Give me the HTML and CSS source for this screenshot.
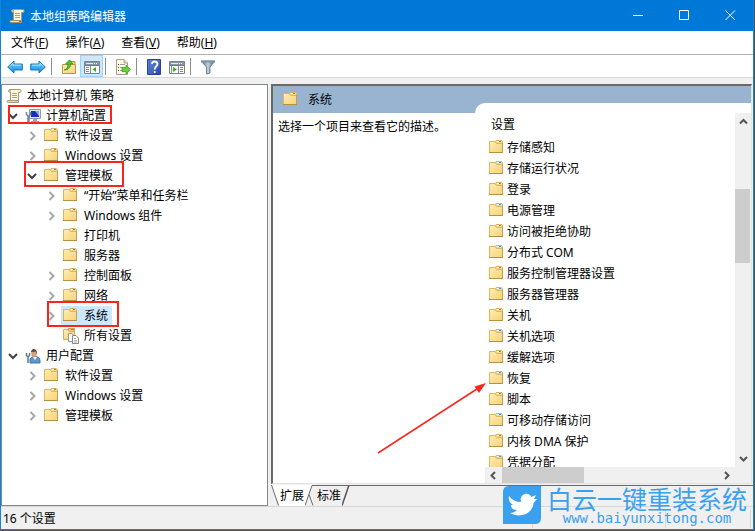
FILE: index.html
```html
<!DOCTYPE html>
<html lang="zh-CN">
<head>
<meta charset="utf-8">
<title>本地组策略编辑器</title>
<link rel="stylesheet" href="styles.css">
</head>
<body>
<svg class="sprite" aria-hidden="true">
  <defs>
    <linearGradient id="gold" x1="0" y1="0" x2="1" y2="1"><stop offset="0" stop-color="#ffeeb0"/><stop offset="1" stop-color="#f5d27a"/></linearGradient>
    <linearGradient id="sky" x1="0" y1="0" x2="0" y2="1"><stop offset="0" stop-color="#7ad4fa"/><stop offset="1" stop-color="#0d8be0"/></linearGradient>
    <linearGradient id="help" x1="0" y1="0" x2="1" y2="1"><stop offset="0" stop-color="#6f8fe0"/><stop offset="1" stop-color="#2444a8"/></linearGradient>
    <linearGradient id="steel" x1="0" y1="0" x2="1" y2="0"><stop offset="0" stop-color="#4f6474"/><stop offset=".5" stop-color="#c0d2de"/><stop offset="1" stop-color="#3f5464"/></linearGradient>
    <symbol id="folder" viewBox="0 1 16 16">
      <path d="M6.500 5V2.500L7 1.500H12.500L13.500 2.500V5" fill="#f0d690" stroke="#d6b468"/>
      <path d="M8 2.500H12" stroke="#fff"/><path d="M10 2.500H12" stroke="#3d9be0"/>
      <path d="M.500 2.500H6L7.500 4.500H13.500V13.500H.500Z" fill="url(#gold)" stroke="#dcb662"/>
      <path d="M0 13.500H14" stroke="#b98f42"/><path d="M13.500 4V13" stroke="#c89e4c"/>
    </symbol>
    <symbol id="scroll" viewBox="0 0 16 16">
      <path d="M4 1.500H14C15.500 1.500 15.500 4.500 14 4.500H12.500V12.500H4.500V3.500C4.500 2.500 4 1.500 4 1.500Z" fill="#fbf5dc" stroke="#a69a76"/>
      <path d="M4 1.500C2 1.500 2 4.500 4.500 4.500" fill="#d9ceaa" stroke="#a69a76"/>
      <path d="M2 12.500H10C10 15 12.500 15 12.500 12.500V14.500H2.500C.500 14.500 .500 12.500 2 12.500Z" fill="#e6dcb9" stroke="#a69a76"/>
      <path d="M6 5.500H11M6 7.500H11M6 9.500H11" stroke="#a9a18b"/>
    </symbol>
    <symbol id="computer" viewBox="0 0 16 16">
      <path d="M4.500 1.500H15.500V10.500H4.500Z" fill="#dfe5ee" stroke="#8f99aa"/>
      <path d="M6 3H14V9H6Z" fill="#1830b8"/><path d="M10 3H14V8Z" fill="#7fa9ef"/>
      <path d="M8 11H12V13H14V14.500H6V13H8Z" fill="#9ba4b4"/>
      <path d="M1.500 4V6.500L3 8V15M5.500 4V6.500L3.500 8M4 8V15" fill="none" stroke="#71889a" stroke-width="1.500"/>
    </symbol>
    <symbol id="user" viewBox="0 0 16 16">
      <path d="M5 15V11C6 9 8 8.500 10 8.500C13 8.500 15 10 15 13V15Z" fill="#5c96cc" stroke="#3f78ab"/>
      <path d="M8 9L10 12L12 9Z" fill="#fff"/>
      <ellipse cx="9" cy="5.500" rx="2.800" ry="3.500" fill="#d9a078"/>
      <path d="M6 4C6.500 -.500 12.500 0 12 6L10.500 3.500Z" fill="#584438"/>
      <path d="M1.500 5V7.500L3 9V15M4.500 5V7.500L3 9" fill="none" stroke="#60788b" stroke-width="1.500"/>
    </symbol>
    <symbol id="allset" viewBox="0 0 16 16">
      <path d="M5.500 3V.500H11.500V4" fill="#e9cc84" stroke="#c9a14d"/><path d="M8 1.500H11" stroke="#3d9be0"/>
      <path d="M.500 1.500H4.500L6 3.500H11.500V11.500H.500Z" fill="url(#gold)" stroke="#d5ac57"/>
      <path d="M5.500 5.500H9L11.500 8V13.500H5.500Z" fill="#fff" stroke="#959595"/>
      <path d="M9.500 7.500H13L15.500 10V15.500H9.500Z" fill="#fff" stroke="#888"/>
      <path d="M11 10.500H13M11 12.500H14M11 14H14" stroke="#aaa"/>
    </symbol>
    <symbol id="arrow" viewBox="0 0 16 16"><path d="M.700 8L7 2V5H15.300V11H7V14Z" fill="url(#sky)" stroke="#1976b4"/><path d="M2.500 7.800L6 4.500V6.200H14" fill="none" stroke="#a4e4ff"/></symbol>
    <symbol id="chev" viewBox="0 0 16 16"><path d="M6.500 4L10.500 8L6.500 12" fill="none" stroke="#a6a6a6" stroke-width="2"/></symbol>
    <symbol id="chevopen" viewBox="0 0 16 16"><path d="M4 6L8 10L12 6" fill="none" stroke="#404040" stroke-width="2"/></symbol>
    <symbol id="pane" viewBox="0 0 16 16">
      <path d="M.500 2.500H15.500V14.500H.500Z" fill="#fff" stroke="#78838e"/>
      <path d="M1 3H15V6H1Z" fill="#8997a5"/><path d="M2 4.500H9" stroke="#e2e8ed"/><path d="M10 4.500H14" stroke="#fff" stroke-dasharray="1 1"/>
      <path d="M1 6.500H15" stroke="#6d7985"/>
    </symbol>
  </defs>
</svg>

<div class="window">
  <header class="titlebar">
    <svg class="icon"><use href="#scroll"/></svg>
    <h1>本地组策略编辑器</h1>
    <div class="controls">
      <button type="button" aria-label="最小化"><svg viewBox="0 0 11 11"><path d="M0 5.500H10"/></svg></button>
      <button type="button" aria-label="最大化"><svg viewBox="0 0 11 11"><path d="M.500 .500H9.500V9.500H.500Z"/></svg></button>
      <button type="button" aria-label="关闭"><svg viewBox="0 0 11 11"><path d="M.500 .500L10 10M10 .500L.500 10"/></svg></button>
    </div>
  </header>

  <nav class="menubar">
    <button type="button">文件(<u>F</u>)</button>
    <button type="button">操作(<u>A</u>)</button>
    <button type="button">查看(<u>V</u>)</button>
    <button type="button">帮助(<u>H</u>)</button>
  </nav>

  <div class="toolbar" role="toolbar">
    <button type="button" aria-label="后退"><svg class="icon"><use href="#arrow"/></svg></button>
    <button type="button" aria-label="前进"><svg class="icon flip"><use href="#arrow"/></svg></button>
    <span class="sep"></span>
    <button type="button" aria-label="上一级"><svg class="icon" viewBox="0 0 16 16"><path d="M9 4V2.500H14V5" fill="#e9cc84" stroke="#b99749"/><path d="M1.500 5.500H14.500V14.500H1.500Z" fill="url(#gold)" stroke="#b99749"/><path d="M3 11C6 10 7 8 7 5H4.500L8.500 .800L12 5H9.500C9.500 9 7 11 3 11Z" fill="#4fc32a" stroke="#2f8f1b" stroke-width=".700"/></svg></button>
    <button type="button" class="active" aria-label="显示/隐藏控制台树"><svg class="icon" viewBox="0 0 16 16"><use href="#pane"/><path d="M2 8.500H5M2 10.500H5M2 12.500H5" stroke="#7d8c9b"/><path d="M6.500 7V14" stroke="#7d8c9b"/><path d="M12 8V13L8.500 10.500Z" fill="#34ad25"/></svg></button>
    <span class="sep"></span>
    <button type="button" aria-label="导出列表"><svg class="icon" viewBox="0 0 16 16"><path d="M1.500 .500H9L12.500 4V15.500H1.500Z" fill="#fffbe8" stroke="#a9a184"/><path d="M9 .500V4H12.500" fill="#e5dcc0" stroke="#a9a184"/><path d="M3 5.500H4M3 8.500H4M3 11.500H4" stroke="#555"/><path d="M5 5.500H10M5 8.500H8M5 11.500H9" stroke="#99a"/><path d="M7 8.500H11V6L15.500 10.500L11 15V12.500H7Z" fill="#67d13b" stroke="#38a31c" stroke-width=".800"/></svg></button>
    <span class="sep"></span>
    <button type="button" aria-label="帮助"><svg class="icon" viewBox="0 0 16 16"><path d="M1.500 .500H14.500V15.500H1.500Z" fill="url(#help)" stroke="#26409a"/><path d="M3.500 1V15" stroke="#4264bd"/><path d="M6 5C6 1.500 11.500 1.800 11.500 5C11.500 7.500 8.700 7.500 8.700 10.500" fill="none" stroke="#fff" stroke-width="1.800"/><circle cx="8.700" cy="13" r="1.100" fill="#fff"/></svg></button>
    <button type="button" aria-label="显示/隐藏操作窗格"><svg class="icon" viewBox="0 0 16 16"><use href="#pane"/><path d="M11 8.500H14M11 10.500H14M11 12.500H14" stroke="#4d93c5"/><path d="M9.500 7V14M2.500 7V14" stroke="#7d8c9b"/><path d="M4 8V13L8 10.500Z" fill="#34ad25"/></svg></button>
    <span class="sep"></span>
    <button type="button" aria-label="筛选器"><svg class="icon" viewBox="0 0 16 16"><path d="M1 2H15L10 8V14L6.500 15V8Z" fill="url(#steel)" stroke="#597080" stroke-width=".800"/><path d="M1 2.500H15" stroke="#7e96a6" stroke-width="2"/></svg></button>
  </div>

  <main class="body">
    <section class="tree" aria-label="控制台树">
      <ul>
        <li><div class="row root"><span class="label"><svg class="icon"><use href="#scroll"/></svg>本地计算机 策略</span></div></li>
        <li><div class="row"><svg class="icon"><use href="#chevopen"/></svg><span class="label"><svg class="icon"><use href="#computer"/></svg>计算机配置</span><i class="mark mark-config"></i></div>
          <ul>
            <li><div class="row"><svg class="icon"><use href="#chev"/></svg><span class="label"><svg class="icon"><use href="#folder"/></svg>软件设置</span></div></li>
            <li><div class="row"><svg class="icon"><use href="#chev"/></svg><span class="label"><svg class="icon"><use href="#folder"/></svg>Windows 设置</span></div></li>
            <li><div class="row"><svg class="icon"><use href="#chevopen"/></svg><span class="label"><svg class="icon"><use href="#folder"/></svg>管理模板</span><i class="mark mark-template"></i></div>
              <ul>
                <li><div class="row"><svg class="icon"><use href="#chev"/></svg><span class="label"><svg class="icon"><use href="#folder"/></svg>“开始”菜单和任务栏</span></div></li>
                <li><div class="row"><svg class="icon"><use href="#chev"/></svg><span class="label"><svg class="icon"><use href="#folder"/></svg>Windows 组件</span></div></li>
                <li><div class="row"><svg class="icon"></svg><span class="label"><svg class="icon"><use href="#folder"/></svg>打印机</span></div></li>
                <li><div class="row"><svg class="icon"></svg><span class="label"><svg class="icon"><use href="#folder"/></svg>服务器</span></div></li>
                <li><div class="row"><svg class="icon"><use href="#chev"/></svg><span class="label"><svg class="icon"><use href="#folder"/></svg>控制面板</span></div></li>
                <li><div class="row"><svg class="icon"><use href="#chev"/></svg><span class="label"><svg class="icon"><use href="#folder"/></svg>网络</span></div></li>
                <li><div class="row"><svg class="icon"><use href="#chev"/></svg><span class="label selected"><svg class="icon"><use href="#folder"/></svg>系统</span><i class="mark mark-system"></i></div></li>
                <li><div class="row"><svg class="icon"></svg><span class="label"><svg class="icon"><use href="#allset"/></svg>所有设置</span></div></li>
              </ul>
            </li>
          </ul>
        </li>
        <li><div class="row"><svg class="icon"><use href="#chevopen"/></svg><span class="label"><svg class="icon"><use href="#user"/></svg>用户配置</span></div>
          <ul>
            <li><div class="row"><svg class="icon"><use href="#chev"/></svg><span class="label"><svg class="icon"><use href="#folder"/></svg>软件设置</span></div></li>
            <li><div class="row"><svg class="icon"><use href="#chev"/></svg><span class="label"><svg class="icon"><use href="#folder"/></svg>Windows 设置</span></div></li>
            <li><div class="row"><svg class="icon"><use href="#chev"/></svg><span class="label"><svg class="icon"><use href="#folder"/></svg>管理模板</span></div></li>
          </ul>
        </li>
      </ul>
    </section>

    <section class="right">
      <div class="details">
        <div class="banner">
          <h2><svg class="icon"><use href="#folder"/></svg>系统</h2>
          <div class="notch"></div>
        </div>
        <div class="columns">
          <p class="description">选择一个项目来查看它的描述。</p>
          <div class="listing">
            <div class="list">
              <h3>设置</h3>
              <ul>
                <li><svg class="icon"><use href="#folder"/></svg>存储感知</li>
                <li><svg class="icon"><use href="#folder"/></svg>存储运行状况</li>
                <li><svg class="icon"><use href="#folder"/></svg>登录</li>
                <li><svg class="icon"><use href="#folder"/></svg>电源管理</li>
                <li><svg class="icon"><use href="#folder"/></svg>访问被拒绝协助</li>
                <li><svg class="icon"><use href="#folder"/></svg>分布式 COM</li>
                <li><svg class="icon"><use href="#folder"/></svg>服务控制管理器设置</li>
                <li><svg class="icon"><use href="#folder"/></svg>服务器管理器</li>
                <li><svg class="icon"><use href="#folder"/></svg>关机</li>
                <li><svg class="icon"><use href="#folder"/></svg>关机选项</li>
                <li><svg class="icon"><use href="#folder"/></svg>缓解选项</li>
                <li><svg class="icon"><use href="#folder"/></svg>恢复</li>
                <li><svg class="icon"><use href="#folder"/></svg>脚本</li>
                <li><svg class="icon"><use href="#folder"/></svg>可移动存储访问</li>
                <li><svg class="icon"><use href="#folder"/></svg>内核 DMA 保护</li>
                <li><svg class="icon"><use href="#folder"/></svg>凭据分配</li>
              </ul>
            </div>
            <div class="vscroll">
              <button type="button" aria-label="向上滚动"><svg viewBox="0 0 9 9"><path d="M1 6.500L4.500 3L8 6.500"/></svg></button>
              <div class="rail"><span class="thumb"></span></div>
              <button type="button" aria-label="向下滚动"><svg viewBox="0 0 9 9"><path d="M1 3L4.500 6.500L8 3"/></svg></button>
            </div>
            <div class="hscroll">
              <button type="button" aria-label="向左滚动"><svg viewBox="0 0 9 9"><path d="M6 1L2.500 4.500L6 8"/></svg></button>
              <div class="rail"><span class="thumb"></span></div>
              <button type="button" aria-label="向右滚动"><svg viewBox="0 0 9 9"><path d="M3 1L6.500 4.500L3 8"/></svg></button>
            </div>
          </div>
          <svg class="pointer" viewBox="0 0 110 72" aria-hidden="true"><path d="M1 71L103 5" stroke="#f8281c" stroke-width="1.500"/><path d="M109 1L102 11L97.500 4.500Z" fill="#f8281c"/></svg>
        </div>
      </div>
      <div class="tabs">
        <svg class="edge" viewBox="0 0 8 21"><path d="M0 0H8V20.500Z" fill="#fff"/><path d="M.500 0L7.500 20.500" stroke="#696969"/></svg>
        <button type="button" class="tab current">扩展</button>
        <svg class="edge middle" viewBox="0 0 11 21"><path d="M0 0H7L4 9L0 20.500Z" fill="#fff"/><path d="M0 20.500L7 .500H11M4 9.500L8 20.500" fill="none" stroke="#696969"/></svg>
        <button type="button" class="tab">标准</button>
        <svg class="edge" viewBox="0 0 8 21"><path d="M0 20.500L7 0" stroke="#555" stroke-width="1.500"/><path d="M0 .500H8" stroke="#696969"/></svg>
        <span class="tabline"></span>
      </div>
    </section>
  </main>

  <footer class="status"><span class="count">16 个设置</span><span class="cell first"></span><span class="cell second"></span></footer>

  <div class="watermark">
    <svg viewBox="0 0 38 38" aria-hidden="true"><path d="M6 0H38V32Q38 38 32 38H0V6Q0 0 6 0Z" fill="#3aa0f0"/><path d="M6 10C9 14 13 16 18 16C16 8 25 5 28.500 11L33 9L31 13L34 13L30.500 17C30 27 18 33 7 27C10 27 12 26 14 24C10 24 8 22 8 19H10C7 17 5 14 6 10Z" fill="#fff"/></svg>
    <div><strong>白云一键重装系统</strong><span>www.baiyunxitong.com</span></div>
  </div>
</div>
</body>
</html>
```
FILE: styles.css
```css
* { box-sizing: border-box; }

body {
  margin: 0;
  padding: 0 1px 1px 0;
  height: 100vh;
  overflow: hidden;
  background: #4a5058;
  color: #000;
  font: 12px/20px "Noto Sans", "Noto Sans CJK SC", sans-serif;
}

ul { margin: 0; padding: 0; list-style: none; }
h1, h2, h3, p { margin: 0; font-size: 12px; font-weight: 400; }
button { margin: 0; padding: 0; border: 0; background: none; color: inherit; font: inherit; }
svg { display: block; flex: none; }

.sprite { position: absolute; width: 0; height: 0; }
.icon { width: 16px; height: 16px; }
.flip { transform: scaleX(-1); }

.window {
  position: relative;
  display: flex;
  flex-direction: column;
  height: 100%;
  border: 1px solid #1583d8;
  border-top: 0;
  background: #f0f0f0;
}

.titlebar {
  display: flex;
  align-items: center;
  height: 31px;
  padding-left: 8px;
  gap: 5px;
  background: #0078d7;
  color: #fff;
}
.titlebar h1 { padding-top: 2px; }
.controls { display: flex; align-self: stretch; margin-left: auto; }
.controls button { display: grid; place-items: center; width: 46px; }
.controls svg { width: 11px; height: 11px; fill: none; stroke: #fff; }

.menubar {
  display: flex;
  gap: 17px;
  height: 24px;
  padding: 1px 0 0 10px;
  border-bottom: 1px solid #b0b0b0;
  background: #fff;
}

.toolbar {
  display: flex;
  height: 23px;
  padding-left: 2px;
  border-bottom: 1px solid #d9d9d9;
  background: #fff;
}
.toolbar button { display: grid; place-items: center; width: 23px; padding-top: 2px; }
.toolbar .active { padding-top: 1px; border: 1px solid #99d1ff; background: #cce8ff; }
.sep { width: 1px; margin: 3px 5px 2px 2px; background: #8d8d8d; }

.body { display: flex; flex: 1; min-height: 0; gap: 3px; padding-top: 6px; }

.tree {
  flex: 0 0 267px;
  overflow: hidden;
  padding-top: 1px;
  border: 1px solid #828790;
  background: #fff;
}
.tree ul ul { padding-left: 19px; }
.row { position: relative; display: flex; align-items: center; height: 20px; padding-left: 3px; white-space: nowrap; }
.root { padding-left: 0; }
.label { display: flex; align-items: center; gap: 5px; margin-left: 2px; padding: 0 4px 0 2px; }
.selected { background: #cce8ff; }

.mark { position: absolute; border: 2px solid #fb2418; }
.mark-config { left: 6px; top: -1px; width: 104px; height: 19px; }
.mark-template { left: 3px; top: -5px; width: 100px; height: 26px; }
.mark-system { left: 7px; top: -5px; width: 72px; height: 26px; }

.right { display: flex; flex: 1; flex-direction: column; min-width: 0; }
.details {
  display: flex;
  flex: 1;
  flex-direction: column;
  min-height: 0;
  margin-right: 1px;
  border-top: 2px solid #696969;
  border-left: 2px solid #696969;
  border-right: 1px solid #e3e3e3;
  border-bottom: 1px solid #e3e3e3;
  background: #fff;
}
.banner { display: flex; align-items: flex-end; height: 27px; background: #99b4d1; }
.banner h2 { display: flex; align-items: center; align-self: stretch; gap: 9px; flex: 0 0 202px; padding-left: 10px; }
.notch { flex: 1; height: 10px; border-top-left-radius: 10px; background: #fff; }

.columns { position: relative; display: flex; flex: 1; min-height: 0; }
.description { flex: 0 0 212px; padding: 4px 5px; white-space: nowrap; }
.listing { display: grid; flex: 1; min-width: 0; grid-template: minmax(0, 1fr) 16px / minmax(0, 1fr) 16px; }
.list { overflow: hidden; padding-left: 4px; white-space: nowrap; }
.list h3 { padding: 2px 2px; }
.list li { display: flex; align-items: center; gap: 2px; height: 21px; }

.vscroll, .hscroll { display: flex; background: #f0f0f0; }
.vscroll { flex-direction: column; }
.hscroll { grid-column: 1 / -1; padding-right: 16px; }
.vscroll button, .hscroll button { display: grid; place-items: center; flex: 0 0 17px; }
.vscroll svg, .hscroll svg { width: 9px; height: 9px; fill: none; stroke: #555; stroke-width: 2; }
.rail { display: flex; flex: 1; }
.thumb { background: #cdcdcd; }
.vscroll .thumb { width: 15px; height: 23%; margin-top: 59px; }
.hscroll .thumb { width: 38%; }

.pointer { position: absolute; left: 104px; top: 269px; width: 110px; height: 72px; fill: none; }

.tabs { display: flex; height: 22px; padding-top: 1px; }
.edge { width: 8px; height: 21px; }
.middle { width: 11px; }
.tab { padding: 0 1px; border-top: 1px solid #696969; }
.current { border-color: #fff; background: #fff; }
.tabline { flex: 1; height: 1px; background: #696969; }

.status { display: flex; height: 23px; padding: 2px 2px 1px; border-top: 1px solid #d7d7d7; }
.count { flex: 1; }
.cell { border-left: 1px solid #d7d7d7; }
.first { flex: 0 0 133px; }
.second { flex: 0 0 86px; border-right: 1px solid #d7d7d7; }

.watermark { position: absolute; right: 6px; bottom: 3px; display: flex; gap: 6px; color: #3aa0f0; }
.watermark svg { width: 38px; height: 38px; }
.watermark strong { display: block; font: 400 25px/24px "Noto Sans CJK SC", sans-serif; }
.watermark span { display: block; font: 14px/16px "DejaVu Sans Mono", monospace; text-align: center; }
```
